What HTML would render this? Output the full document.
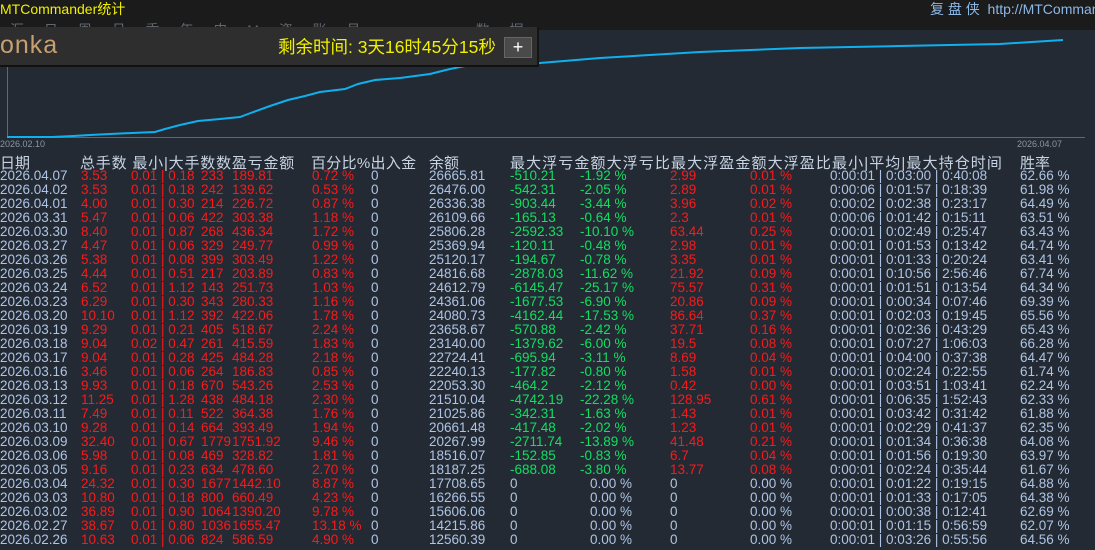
<!DOCTYPE html>
<html><head><meta charset="utf-8"><style>
html,body{margin:0;width:1095px;height:550px;overflow:hidden}
body{background:#232a33;font-family:"Liberation Sans","Noto Sans CJK SC",sans-serif;position:relative}
.top{position:absolute;left:0;top:0;width:1095px;height:30px;background:#1b1b1b}
.t1{position:absolute;left:0;top:-1px;color:#f0f000;font-size:14px}
.t2{position:absolute;left:930px;top:-1px;color:#8cb8e8;font-size:14px;white-space:nowrap}
.menu{position:absolute;left:10px;top:19px;color:#606870;font-size:14px;letter-spacing:8px;height:10px;overflow:hidden;white-space:nowrap;line-height:22px}
.panel{position:absolute;left:0;top:27px;width:537px;height:38px;background:#2e2e2e;border-bottom:2px solid #111;border-right:2px solid #151515}
.logo{position:absolute;left:0;top:4px;font-size:25px;color:#c8a070;letter-spacing:1px}
.timer{position:absolute;left:278px;top:7px;color:#f0f000;font-size:17.5px}
.plus{position:absolute;left:504px;top:10px;width:26px;height:19px;background:#4a4a4a;border:1px solid #666;color:#fff;text-align:center;font-size:18px;line-height:18px}
svg{position:absolute;left:0;top:0}
.lbl{position:absolute;font-size:9px;color:#8a96a4}
.hd{position:absolute;top:152px;font-size:15px;color:#c8d4e4;white-space:nowrap}
.r{position:absolute;left:0;height:14px;width:1095px;font-size:13.5px;line-height:14px;white-space:nowrap}
.r span{position:absolute;top:0}
.b{color:#aec4e4}.d{color:#ff1818}.g{color:#10e060}
</style></head><body>
<div class="top">
<div class="t1">MTCommander统计</div>
<div class="t2">复 盘 侠 &nbsp;http://MTCommander</div>
<div class="menu">汇 日 周 月 季 年 史 M 资 账 号 &nbsp; &nbsp; &nbsp; &nbsp; 数 据</div>
</div>
<svg width="1095" height="150">
<line x1="7.5" y1="66" x2="7.5" y2="137" stroke="#606870"/>
<line x1="7" y1="137.5" x2="1085" y2="137.5" stroke="#606870"/>
<polyline fill="none" stroke="#10b0ee" stroke-width="2" points="7,137 52,137 73,136 90,135 110,134 132,133 155,132 165,129 180,125 198,121 220,119 240,117 248,114 270,106 288,100 305,96 320,92 345,89 358,84 375,80 400,78 430,74 450,69 470,65 540,63 600,58 700,52 800,48 900,46 1000,44 1063,40"/>
</svg>
<div class="lbl" style="left:0;top:139px">2026.02.10</div>
<div class="lbl" style="left:1017px;top:139px">2026.04.07</div>
<div class="panel"><div class="logo">onka</div><div class="timer">剩余时间: 3天16时45分15秒</div><div class="plus">+</div></div>
<div class="hd" style="left:0">日期</div>
<div class="hd" style="left:80px;letter-spacing:0.8px">总手数 最小|大手数数盈亏金额</div>
<div class="hd" style="left:311px;letter-spacing:0.3px">百分比%出入金</div>
<div class="hd" style="left:429px">余额</div>
<div class="hd" style="left:510px;letter-spacing:1.1px">最大浮亏金额大浮亏比最大浮盈金额大浮盈比最小|平均|最大持仓时间</div>
<div class="hd" style="left:1020px">胜率</div>
<div id="rows"></div>
<script>
var D=[
["04.07","3.53","0.18","233","189.81","0.72","26665.81","-510.21","-1.92","2.99","0.01","0:00:01 | 0:03:00 | 0:40:08","62.66"],
["04.02","3.53","0.18","242","139.62","0.53","26476.00","-542.31","-2.05","2.89","0.01","0:00:06 | 0:01:57 | 0:18:39","61.98"],
["04.01","4.00","0.30","214","226.72","0.87","26336.38","-903.44","-3.44","3.96","0.02","0:00:02 | 0:02:38 | 0:23:17","64.49"],
["03.31","5.47","0.06","422","303.38","1.18","26109.66","-165.13","-0.64","2.3","0.01","0:00:06 | 0:01:42 | 0:15:11","63.51"],
["03.30","8.40","0.87","268","436.34","1.72","25806.28","-2592.33","-10.10","63.44","0.25","0:00:01 | 0:02:49 | 0:25:47","63.43"],
["03.27","4.47","0.06","329","249.77","0.99","25369.94","-120.11","-0.48","2.98","0.01","0:00:01 | 0:01:53 | 0:13:42","64.74"],
["03.26","5.38","0.08","399","303.49","1.22","25120.17","-194.67","-0.78","3.35","0.01","0:00:01 | 0:01:33 | 0:20:24","63.41"],
["03.25","4.44","0.51","217","203.89","0.83","24816.68","-2878.03","-11.62","21.92","0.09","0:00:01 | 0:10:56 | 2:56:46","67.74"],
["03.24","6.52","1.12","143","251.73","1.03","24612.79","-6145.47","-25.17","75.57","0.31","0:00:01 | 0:01:51 | 0:13:54","64.34"],
["03.23","6.29","0.30","343","280.33","1.16","24361.06","-1677.53","-6.90","20.86","0.09","0:00:01 | 0:00:34 | 0:07:46","69.39"],
["03.20","10.10","1.12","392","422.06","1.78","24080.73","-4162.44","-17.53","86.64","0.37","0:00:01 | 0:02:03 | 0:19:45","65.56"],
["03.19","9.29","0.21","405","518.67","2.24","23658.67","-570.88","-2.42","37.71","0.16","0:00:01 | 0:02:36 | 0:43:29","65.43"],
["03.18","9.04","0.47","261","415.59","1.83","23140.00","-1379.62","-6.00","19.5","0.08","0:00:01 | 0:07:27 | 1:06:03","66.28","0.02"],
["03.17","9.04","0.28","425","484.28","2.18","22724.41","-695.94","-3.11","8.69","0.04","0:00:01 | 0:04:00 | 0:37:38","64.47"],
["03.16","3.46","0.06","264","186.83","0.85","22240.13","-177.82","-0.80","1.58","0.01","0:00:01 | 0:02:24 | 0:22:55","61.74"],
["03.13","9.93","0.18","670","543.26","2.53","22053.30","-464.2","-2.12","0.42","0.00","0:00:01 | 0:03:51 | 1:03:41","62.24"],
["03.12","11.25","1.28","438","484.18","2.30","21510.04","-4742.19","-22.28","128.95","0.61","0:00:01 | 0:06:35 | 1:52:43","62.33"],
["03.11","7.49","0.11","522","364.38","1.76","21025.86","-342.31","-1.63","1.43","0.01","0:00:01 | 0:03:42 | 0:31:42","61.88"],
["03.10","9.28","0.14","664","393.49","1.94","20661.48","-417.48","-2.02","1.23","0.01","0:00:01 | 0:02:29 | 0:41:37","62.35"],
["03.09","32.40","0.67","1779","1751.92","9.46","20267.99","-2711.74","-13.89","41.48","0.21","0:00:01 | 0:01:34 | 0:36:38","64.08"],
["03.06","5.98","0.08","469","328.82","1.81","18516.07","-152.85","-0.83","6.7","0.04","0:00:01 | 0:01:56 | 0:19:30","63.97"],
["03.05","9.16","0.23","634","478.60","2.70","18187.25","-688.08","-3.80","13.77","0.08","0:00:01 | 0:02:24 | 0:35:44","61.67"],
["03.04","24.32","0.30","1677","1442.10","8.87","17708.65",null,null,null,null,"0:00:01 | 0:01:22 | 0:19:15","64.88"],
["03.03","10.80","0.18","800","660.49","4.23","16266.55",null,null,null,null,"0:00:01 | 0:01:33 | 0:17:05","64.38"],
["03.02","36.89","0.90","1064","1390.20","9.78","15606.06",null,null,null,null,"0:00:01 | 0:00:38 | 0:12:41","62.69"],
["02.27","38.67","0.80","1036","1655.47","13.18","14215.86",null,null,null,null,"0:00:01 | 0:01:15 | 0:56:59","62.07"],
["02.26","10.63","0.06","824","586.59","4.90","12560.39",null,null,null,null,"0:00:01 | 0:03:26 | 0:55:56","64.56"]];
var h="";
D.forEach(function(r,i){
 var s='<div class="r" style="top:'+(169+14*i)+'px">';
 function sp(x,c,t){s+='<span class="'+c+'" style="left:'+x+'px">'+t+'</span>';}
 sp(0,"b","2026."+r[0]);sp(81,"d",r[1]);sp(131,"d",(r[13]||"0.01")+" | "+r[2]);
 sp(201,"d",r[3]);sp(232,"d",r[4]);sp(312,"d",r[5]+" %");sp(371,"b","0");sp(429,"b",r[6]);
 if(r[7]){sp(510,"g",r[7]);sp(580,"g",r[8]+" %");sp(670,"d",r[9]);sp(750,"d",r[10]+" %");}
 else{sp(510,"b","0");sp(590,"b","0.00 %");sp(670,"b","0");sp(750,"b","0.00 %");}
 sp(830,"b",r[11]);sp(1020,"b",r[12]+" %");
 h+=s+'</div>';
});
document.getElementById("rows").innerHTML=h;
</script>
</body></html>
